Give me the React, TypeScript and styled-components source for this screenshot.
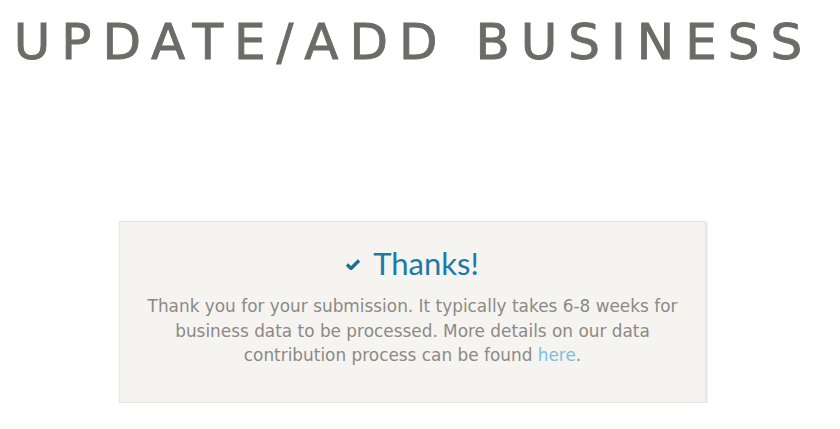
import React from "react";
import styled, { createGlobalStyle } from "styled-components";

const GlobalStyle = createGlobalStyle`
  html, body { margin: 0; padding: 0; background: #ffffff; }
  body { font-family: "DejaVu Sans", "Open Sans", sans-serif; }
`;

const Page = styled.div`
  width: 825px;
  display: flex;
  flex-direction: column;
  align-items: center;
`;

const Heading = styled.h1`
  margin: 14px 0 0 2px;
  font-family: "DejaVu Sans", sans-serif;
  font-weight: 400;
  font-size: 50px;
  line-height: 56px;
  letter-spacing: 11px;
  color: #6b6b6a;
  -webkit-text-stroke: 0.9px #6b6b6a;
  white-space: nowrap;
`;

const Card = styled.section`
  box-sizing: border-box;
  width: 587px;
  height: 182px;
  margin-top: 151px;
  background: #f5f4f1;
  border: 1px solid #e8e6e2;
  box-shadow: 1px 1px 2px rgba(0, 0, 0, 0.15);
  display: flex;
  flex-direction: column;
  align-items: center;
  padding: 21px 10px 0;
`;

const Title = styled.h2`
  margin: 0;
  display: flex;
  align-items: center;
  gap: 13px;
  font-family: "Lato", sans-serif;
  font-weight: 400;
  font-size: 31px;
  line-height: 40px;
  color: #1c7aa6;
`;

const Check = styled.svg`
  width: 14px;
  height: 11px;
  margin-top: 3px;
`;

const Text = styled.p`
  margin: 11px 0 0;
  text-align: center;
  font-family: "DejaVu Sans", sans-serif;
  font-size: 16.9px;
  line-height: 24.5px;
  color: #8d8985;
  white-space: nowrap;
`;

const Link = styled.a`
  color: #7cc0de;
  text-decoration: none;
`;

export default function App() {
  return (
    <>
      <GlobalStyle />
      <Page>
        <Heading>UPDATE/ADD BUSINESS</Heading>
        <Card>
          <Title>
            <Check viewBox="0 0 14 11">
              <path d="M1 5.5 L5 9.5 L13 1.5" fill="none" stroke="#1f6f93" strokeWidth="3.4" strokeLinejoin="miter" />
            </Check>
            Thanks!
          </Title>
          <Text>
            Thank you for your submission. It typically takes 6-8 weeks for
            <br />
            business data to be processed. More details on our data
            <br />
            contribution process can be found <Link href="#">here</Link>.
          </Text>
        </Card>
      </Page>
    </>
  );
}
